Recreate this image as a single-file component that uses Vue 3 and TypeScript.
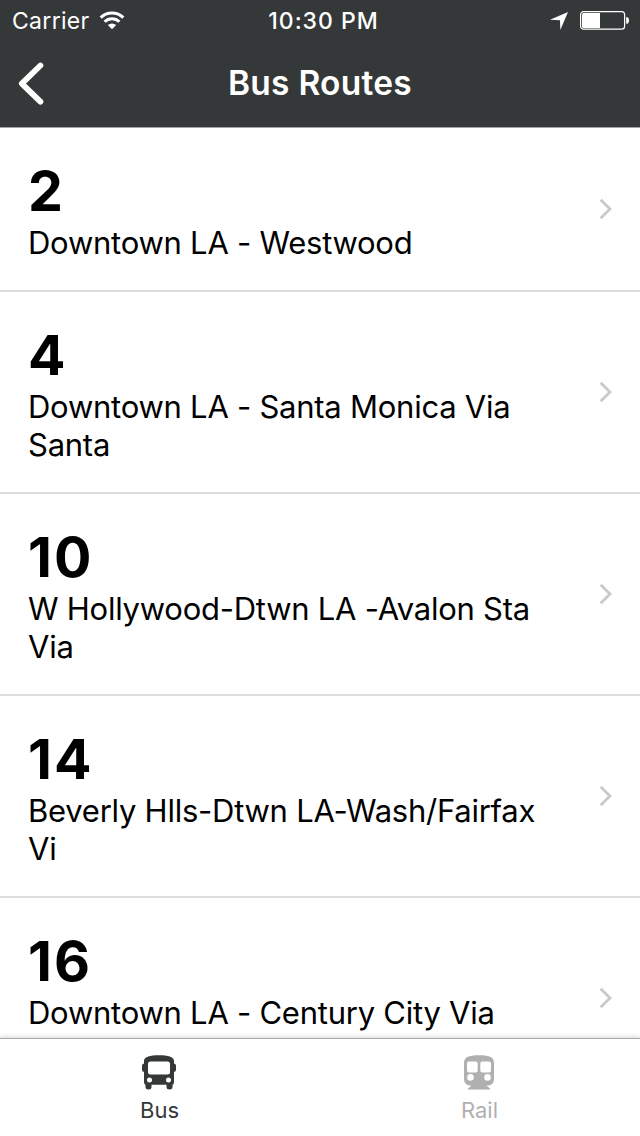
<script setup lang="ts">
interface Route {
  number: string
  name: string
}

const routes: Route[] = [
  { number: '2', name: 'Downtown LA - Westwood' },
  { number: '4', name: 'Downtown LA - Santa Monica Via Santa' },
  { number: '10', name: 'W Hollywood-Dtwn LA -Avalon Sta Via' },
  { number: '14', name: 'Beverly Hlls-Dtwn LA-Wash/Fairfax Vi' },
  { number: '16', name: 'Downtown LA - Century City Via Santa' },
]
</script>

<template>
  <div class="screen">
    <header class="top">
      <div class="status">
        <div class="carrier">
          <span>Carrier</span>
          <svg class="wifi" width="26" height="20" viewBox="0 0 26 20">
            <g fill="none" stroke="#fff" stroke-width="2.9">
              <path d="M1.7 7.6A16 16 0 0 1 24.3 7.6" />
              <path d="M5.6 11.8A10.5 10.5 0 0 1 20.4 11.8" />
            </g>
            <path d="M8.8 15.1A6 6 0 0 1 17.2 15.1L13 19.2Z" fill="#fff" />
          </svg>
        </div>
        <div class="time">10:30 PM</div>
        <div class="indicators">
          <svg width="18" height="20" viewBox="0 0 18 20">
            <path d="M18 2L10.3 20L10 10.3L0 9.7Z" fill="#fff" />
          </svg>
          <svg width="50" height="20" viewBox="0 0 50 20">
            <rect x="0.6" y="1.6" width="44" height="17.6" rx="3" fill="none" stroke="#fff" stroke-width="1.2" />
            <path d="M3.5 3H20V18H3.5Q2 18 2 16.5V4.5Q2 3 3.5 3Z" fill="#fff" />
            <path d="M46.2 7C48 7 49 8.2 49 10.4S48 13.8 46.2 13.8Z" fill="#fff" />
          </svg>
        </div>
      </div>
      <div class="nav">
        <svg class="back" width="28" height="44" viewBox="0 0 28 44">
          <path d="M24.4 3.5L5.8 21.6L24.4 39.7" fill="none" stroke="#fff" stroke-width="5.8" stroke-linecap="round" stroke-linejoin="round" />
        </svg>
        <h1 class="title">Bus Routes</h1>
      </div>
    </header>

    <main class="list">
      <div v-for="route in routes" :key="route.number" class="row">
        <div class="info">
          <div class="number">{{ route.number }}</div>
          <div class="name">{{ route.name }}</div>
        </div>
        <svg class="chevron" width="14" height="22" viewBox="0 0 14 22">
          <path d="M1.7 1.7L11 11L1.7 20.3" fill="none" stroke="#c9c9cd" stroke-width="2.8" />
        </svg>
      </div>
    </main>

    <nav class="tabs">
      <div class="tab active">
        <svg width="34" height="35" viewBox="0 0 34 35">
          <path
            fill="currentColor"
            fill-rule="evenodd"
            d="M2 5.5C2.3 2 8 .3 17 .3S31.7 2 32 5.5V8.5Q34 9 34 10.5V15Q34 16.7 32 17V27Q32 29.5 30.5 29.7V32Q30.5 34.5 27.5 34.5T24.5 32V29.8H9.5V32Q9.5 34.5 6.5 34.5T3.5 32V29.7Q2 29.5 2 27V17Q0 16.7 0 15V10.5Q0 9 2 8.5ZM8.5 6.5Q6 6.5 6 9V17Q6 19.5 8.5 19.5H25.5Q28 19.5 28 17V9Q28 6.5 25.5 6.5ZM7.5 22.4A2.5 2.5 0 1 0 7.5 27.4A2.5 2.5 0 1 0 7.5 22.4ZM26.5 22.4A2.5 2.5 0 1 0 26.5 27.4A2.5 2.5 0 1 0 26.5 22.4Z"
          />
        </svg>
        <span>Bus</span>
      </div>
      <div class="tab">
        <svg width="34" height="35" viewBox="0 0 34 35">
          <path
            fill="currentColor"
            fill-rule="evenodd"
            d="M2 8C2 2.5 6 .3 17 .3S32 2.5 32 8V24Q32 30.5 24.5 30.8L28 33.5V34.5H6V33.5L9.5 30.8Q2 30.5 2 24ZM7 6.5Q5 6.5 5 8.5V15.5Q5 17.5 7 17.5H13.7Q15.7 17.5 15.7 15.5V8.5Q15.7 6.5 13.7 6.5ZM20.3 6.5Q18.3 6.5 18.3 8.5V15.5Q18.3 17.5 20.3 17.5H27Q29 17.5 29 15.5V8.5Q29 6.5 27 6.5ZM8.5 19.1A3.3 3.3 0 1 0 8.5 25.7A3.3 3.3 0 1 0 8.5 19.1ZM25.5 19.1A3.3 3.3 0 1 0 25.5 25.7A3.3 3.3 0 1 0 25.5 19.1Z"
          />
        </svg>
        <span>Rail</span>
      </div>
    </nav>
  </div>
</template>

<style>
body {
  margin: 0;
  overflow: hidden;
}
</style>

<style scoped>
.screen {
  width: 640px;
  height: 1136px;
  display: flex;
  flex-direction: column;
  overflow: hidden;
  background: #fff;
  color: #000;
  font-family: Inter, "Liberation Sans", sans-serif;
}

.top {
  flex: none;
  box-sizing: border-box;
  height: 128px;
  background: #353839;
  color: #fff;
  border-bottom: 1px solid #a3a4a5;
}

.status {
  display: grid;
  grid-template-columns: 1fr auto 1fr;
  align-items: center;
  height: 40px;
  padding: 0 10px 0 12px;
  font-size: 23px;
  line-height: 38px;
}

.carrier {
  display: flex;
  align-items: center;
  gap: 9px;
  letter-spacing: 0.3px;
}

.carrier span,
.time {
  padding-top: 2px;
}

.time {
  padding-left: 5px;
  font-weight: 500;
  letter-spacing: 1px;
}

.indicators {
  display: flex;
  align-items: center;
  justify-content: flex-end;
  gap: 12px;
}

.nav {
  display: grid;
  grid-template-columns: 1fr auto 1fr;
  align-items: center;
  height: 87px;
}

.back {
  margin-left: 16px;
}

.title {
  margin: 0;
  padding-bottom: 1px;
  font-size: 33.5px;
  line-height: 40px;
  font-weight: 600;
  letter-spacing: 0.25px;
}

.list {
  flex: 1;
  min-height: 0;
  overflow: hidden;
}

.row {
  display: flex;
  align-items: center;
  justify-content: space-between;
  padding: 28px 27px 28px 28px;
  border-bottom: 2px solid #dcdcdc;
}

.info {
  width: 520px;
}

.number {
  padding-top: 1px;
  font-size: 55.5px;
  line-height: 67px;
  font-weight: 700;
  letter-spacing: 2px;
}

.name {
  font-size: 31px;
  line-height: 38px;
  letter-spacing: -0.25px;
  font-feature-settings: "calt" 0;
}

.chevron {
  flex: none;
}

.tabs {
  position: relative;
  flex: none;
  box-sizing: border-box;
  display: flex;
  height: 98px;
  background: #fff;
  border-top: 1px solid #a8a8a8;
  box-shadow: 0 -1px 5px rgba(0, 0, 0, 0.16);
}

.tab {
  flex: 1;
  display: flex;
  flex-direction: column;
  align-items: center;
  padding: 16px 2px 0 0;
  color: #b0b0b2;
  font-size: 22px;
  line-height: 28px;
}

.tab span {
  margin-top: 6px;
  padding-left: 1px;
}

.active {
  color: #353839;
}
</style>
